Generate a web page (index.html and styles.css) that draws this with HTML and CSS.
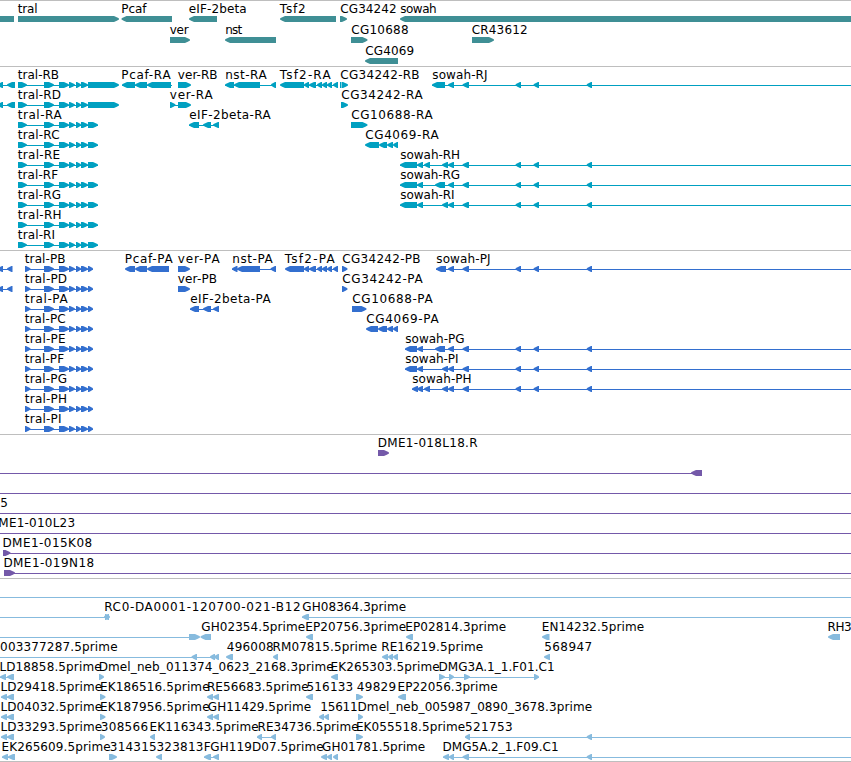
FILE: index.html
```html
<!DOCTYPE html>
<html lang="en">
<head>
<meta charset="utf-8">
<title>Genome map</title>
<link rel="stylesheet" href="styles.css">
</head>
<body>
<main class="map" id="map"></main>
<script src="map.js"></script>
</body>
</html>
```
FILE: styles.css
```css
body {
  margin: 0;
  background: #fff;
  overflow: hidden;
}

.map {
  display: flex;
  flex-direction: column;
  width: 851px;
  border-bottom: 1px solid #bebebe;
}

.track {
  display: flex;
  flex-direction: column;
  border-top: 1px solid #bebebe;
  padding-bottom: 3px;
}

.row {
  display: block;
  width: 851px;
  height: 20px;
  overflow: visible;
  fill: currentColor;
}

.label {
  font: 12px "DejaVu Sans", sans-serif;
  fill: #000;
}

.genes { color: #3f8f95; padding-bottom: 2px; }
.genes .row { height: 21px; }
.transcripts { color: #00a0c1; }
.proteins { color: #336fcf; }
.clones { color: #7459a9; }
.ests { color: #87bbde; padding-bottom: 2px; }
```
FILE: map.js
```js
// Row tokens: name@start~end is a label, >a~b and <a~b are stranded exons,
// =a~b is a plain block, -a~b is an intron line.
const left = "-0~15 <-3~3 <7~15";
const tralR = "-18~98 >18~27 >44~54 >59~69 >69~75 >76~81 >81~88";
const tralP = "-25~93 >25~30.5 >44~54 >59~69 >69~75 >76~81 >81~88 >88~93";
const tsf = "-300~338 <304~309 <309~316 <317~322 <322~327 <327~332 <333~338";
const far = "<448~454 <462.5~469 <515.5~521 <533.5~539 <586.7~592";

const tracks = [
  ["genes", [
    "=0~14 tral@18~37 >18~119 Pcaf@122~146 <121.5~172 eIF-2beta@189~246 <189~217 Tsf2@280~305 <280~336 CG34242@340.5~396 >340~347 sowah@400.5~436 <400~851",
    "ver@170~188 >170~190 nst@225.5~241.5 <225~276 CG10688@351.5~408 >351~367.5 CR43612@472~527 >472~494",
    "CG4069@365.5~413.5 <365~398"
  ]],
  ["transcripts", [
    `${left} tral-RB@18~58.5 ${tralR} >88~119 Pcaf-RA@122~170 -122~172 <122~135 <135~147 <147~171 ver-RB@178~217 >178~191 nst-RA@225.5~266 -225~276 <225~234 <234~260 <271~276 Tsf2-RA@280~330 <280~304 ${tsf} CG34242-RB@340.5~419 =340~341 >341.5~348 sowah-RJ@432.5~487 -432~851 <432~445 ${far}`,
    `${left} tral-RD@18~60.5 ${tralR} >88~119 ver-RA@170~212 -170~180 >170~175.5 >178~191 CG34242-RA@341.5~422 >341~348`,
    `tral-RA@18~61 ${tralR} >88~98 eIF-2beta-RA@189.5~270 -189~219 <189~199 <203~211 <213~219 CG10688-RA@351.5~432 >351~367.5`,
    `tral-RC@18~59 ${tralR} >88~98 CG4069-RA@365.5~438 <365~379 <379~387 <387~393 <393~398`,
    `tral-RE@18~59.5 ${tralR} >88~98 sowah-RH@400.5~459.5 -400~851 <400~417 <417~423 <424~430 <442~448 ${far}`,
    `tral-RF@18~57.5 ${tralR} >88~98 sowah-RG@400.5~459.5 -400~851 <400~417 <417~423 <435~445 ${far}`,
    `tral-RG@18~60.5 ${tralR} >88~98 sowah-RI@400.5~454 -400~851 <400~417 <417~423 <442~448 ${far}`,
    `tral-RH@18~61 ${tralR} >88~98`,
    `tral-RI@18~54.5 ${tralR} >88~98`
  ]],
  ["proteins", [
    `-0~12 <-3~3 <7~12.5 tral-PB@25~65 ${tralP} Pcaf-PA@125.5~172 <125~135 <135~147 <147~169 ver-PA@178~219 >178~190 nst-PA@232.5~272 -232~276 <232~237.5 <237~260 <270.5~276 Tsf2-PA@285~334 <285~304 ${tsf} CG34242-PB@342.5~420 >342~347.5 sowah-PJ@436.5~490 -436~851 <436~446 ${far}`,
    `-0~12 <-3~3 <7~12.5 tral-PD@25~66.5 ${tralP} ver-PB@178~216.5 >178~190 CG34242-PA@342.5~422 >342~347.5`,
    `tral-PA@25~67 ${tralP} eIF-2beta-PA@190.5~270 -190~219 <190~199 <203~211 <213~219 CG10688-PA@352.5~432 >352~366.5`,
    `tral-PC@25~65 ${tralP} CG4069-PA@366.5~438 <366~378 <378~387 <387~393 <393~398`,
    `tral-PE@25~65 ${tralP} sowah-PG@405.5~464 -405~851 <405~417 <417~423 <435~445 ${far}`,
    `tral-PF@25~63.5 ${tralP} sowah-PI@405.5~458 -405~851 <405~417 <417~423 <442~448 ${far}`,
    `tral-PG@25~66.5 ${tralP} sowah-PH@412.5~471 -412~851 <412~418 <417~423 <424~430 <442~448 ${far}`,
    `tral-PH@25~66.5 ${tralP}`,
    `tral-PI@25~61 ${tralP}`
  ]],
  ["clones", [
    "DME1-018L18.R@378.5~477 >378~389",
    "-0~695 <691~702",
    "-0~851",
    "5@0.5~6.5 -0~851",
    "ME1-010L23@-1.5~74.5 -0~851",
    "DME1-015K08@3.2~91.5 -3~851 >3~10.5",
    "DME1-019N18@4.2~93.5 -4~851 >4~15"
  ]],
  ["ests", [
    "-0~851",
    "RC0-DA0001-120700-021-B12@105~300 -0~107 <104~109 >105~110 GH08364.3prime@302.5~405.5 -302~851 <302~309",
    "-0~190 >189~200 <200.5~211 GH02354.5prime@201.5~304.5 EP20756.3prime@306~405.5 <306~313 EP02814.3prime@406~505.5 <406~413 EN14232.5prime@542.5~643.5 <542~549.5 RH3@828.3~851 <828~840",
    "003377287.5prime@0.3~117 -0~218 <191.5~197 <210~215 <214~219 496008@227~273 <226~233 RM07815.5prime@273.3~376.5 <273~278 RE16219.5prime@382~482.5 <382~388 <388~393 <393~398 568947@544.5~591.5 <544~550",
    "LD18858.5prime@0.2~101 -0~14 <0~6 <7~14 Dmel_neb_011374_0623_2168.3prime@99.5~333 >99~104 EK265303.5prime@331.3~439 <331~338 DMG3A.1_1.F01.C1@439.3~554 -439~539 >439~445 >449~454 >464~470 >534~539",
    "LD29418.5prime@1.2~101.5 -1~14 <1~7 <7~14 EK186516.5prime@100.7~209 >100~105.5 RE56683.5prime@207.7~308 <207~213 <213~219 516133@306.7~352.5 <306~313 49829@357~395.5 >356~363 EP22056.3prime@398.3~497 <398~406",
    "LD04032.5prime@1.2~101.5 -1~14 <1~7 <7~14 EK187956.5prime@100.7~209 >100~105.5 GH11429.5prime@208~310.5 <207~213 <213~219 15611@320.5~357 <319~324 <324~329 Dmel_neb_005987_0890_3678.3prime@358.3~591.5 >358~363",
    "LD33293.5prime@1.2~101.5 -1~14 <1~7 <7~14 308566@101~147.5 >100~105 EK116343.5prime@150.3~258 <150~155 RE34736.5prime@258.3~358 -257~276 <257~262 <271~276 EK055518.5prime@356.7~464.5 >356~363 521753@465.3~512 -465~851 <465~470 <586.7~592",
    "EK265609.5prime@2.3~110 -2~15 <2~8 <8~15 314315@110~156 >109~117 323813F@156.7~210 <156~162 GH119D07.5prime@210.5~323 -204~219 <204~211 <213~219 GH01781.5prime@322.3~424.5 <321~327 <327~332 <333~338 DMG5A.2_1.F09.C1@443.3~558 -443~851 <443~449 <449~454 <462.5~469 <586.7~592"
  ]]
];

// Left bearing of the label's first glyph, so that its ink begins at the coordinate.
function bearing(name) {
  return /^[DELPR]/.test(name) ? 0.8 : 0.2;
}

function draw(token) {
  const at = token.indexOf("@");
  if (at > 0) {
    const name = token.slice(0, at);
    const [a, b] = token.slice(at + 1).split("~").map(Number);
    const x = a - bearing(name);
    return `<text class="label" x="${x}" y="12" textLength="${b + 0.6 - x}">${name}</text>`;
  }
  const [a, b] = token.slice(1).split("~").map(Number);
  const w = b - a;
  const head = Math.min(w, 6);
  const notch = head * 0.45;
  switch (token[0]) {
    case "-":
      return `<path d="M${a} 18h${w}v1h${-w}z"/>`;
    case "=":
      return `<path d="M${a} 15h${w}v6h${-w}z"/>`;
    case ">":
      return `<path d="M${a} 15H${b - head + 1}L${b - notch + 1} 16.5L${b} 17.6V18.4L${b - notch + 0.5} 19.7L${b - head + 1} 21H${a}z"/>`;
    default:
      return `<path d="M${b} 15H${a + head - 1}L${a + notch - 1} 16.5L${a} 17.6V18.4L${a + notch - 0.5} 19.7L${a + head - 1} 21H${b}z"/>`;
  }
}

document.getElementById("map").innerHTML = tracks.map(([name, rows]) =>
  `<section class="track ${name}">${rows.map(row =>
    `<svg class="row">${row.split(" ").map(draw).join("")}</svg>`).join("")}</section>`
).join("");
```
